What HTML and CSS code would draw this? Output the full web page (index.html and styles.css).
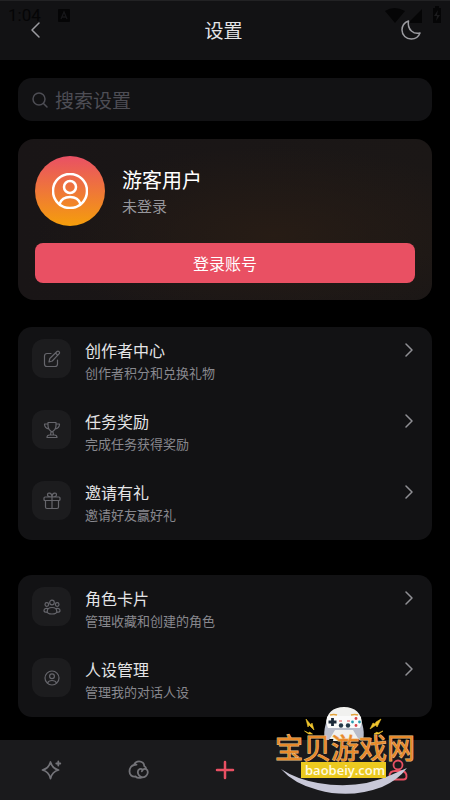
FILE: index.html
```html
<!DOCTYPE html>
<html lang="zh-CN">
<head>
<meta charset="utf-8">
<meta name="viewport" content="width=device-width, initial-scale=1">
<title>设置</title>
<link rel="stylesheet" href="styles.css">
</head>
<body>
<div class="app">
  <div class="status">
    <span class="status-time">1:04</span>
    <svg class="status-app" width="12" height="13" viewBox="0 0 12 13"><rect width="12" height="13" rx="1" fill="#050506"/><path d="M3 10 6 3l3 7M4.200 8h3.600" fill="none" stroke="#17171a" stroke-width="1.300"/></svg>
    <svg class="status-signal" width="58" height="18" viewBox="0 0 58 18" fill="#050506"><path d="M1 5Q10-1 21 5L11 17ZM38 3v14H24ZM49 2h2V0h4v2h2v15h-8Z"/><path d="m54 4-4 6h3l-1 5 4-6h-3Z" fill="#1b1b1d"/></svg>
  </div>
  <header class="topbar">
    <button class="icon-button" aria-label="返回"><svg width="24" height="24" viewBox="0 0 24 24"><path d="m15 5-7 7 7 7"/></svg></button>
    <h1>设置</h1>
    <button class="icon-button" aria-label="深色模式"><svg width="24" height="24" viewBox="0 0 24 24"><path d="M9.500 3C5.500 4.500 3 7.800 3 12c0 5.200 4.200 9 9.300 9 3.900 0 7.200-2.100 8.700-6-6 1.600-13-3-11.500-12Z"/></svg></button>
  </header>
  <main>
    <label class="search">
      <svg width="16" height="16" viewBox="0 0 16 16"><circle cx="7" cy="7" r="6"/><path d="m11.500 11.500 3.500 3.500"/></svg>
      <input type="search" placeholder="搜索设置" aria-label="搜索设置">
    </label>
    <section class="profile">
      <div class="profile-user">
        <div class="avatar"><svg width="36" height="36" viewBox="0 0 36 36"><circle cx="18" cy="18" r="17"/><circle cx="18" cy="14" r="6"/><path d="M7.500 31c1.500-4.500 5.500-7 10.500-7s9 2.500 10.500 7"/></svg></div>
        <div class="profile-text"><h2>游客用户</h2><p>未登录</p></div>
      </div>
      <button class="login">登录账号</button>
    </section>
    <nav class="group" aria-label="创作与奖励">
      <a class="row" href="#creator">
        <span class="tile"><svg width="18" height="18" viewBox="0 0 18 18"><path d="M8 3.500H4A2.500 2.500 0 0 0 1.500 6v8A2.500 2.500 0 0 0 4 16.500h8a2.500 2.500 0 0 0 2.500-2.500v-4M6 12l.8-3.500L14 1.500q1-.8 2 .2t.2 2L9.300 11ZM12.500 3l2.300 2.300"/></svg></span>
        <span class="text"><strong>创作者中心</strong><small>创作者积分和兑换礼物</small></span>
        <svg class="chevron" width="10" height="14" viewBox="0 0 10 14"><path d="m2 1 6 6-6 6"/></svg>
      </a>
      <a class="row" href="#tasks">
        <span class="tile"><svg width="18" height="18" viewBox="0 0 18 18"><path d="M5 1.500h8v3c0 3-1.500 5-4 6.500-2.500-1.500-4-3.500-4-6.500ZM5 3H1.500c0 3 1.500 4.500 4.500 5M13 3h3.500c0 3-1.500 4.500-4.500 5M8 11l-.5 3h3L10 11M4 16.500c0-1.700.8-2.500 2.500-2.500h5c1.700 0 2.500.8 2.500 2.500Z"/></svg></span>
        <span class="text"><strong>任务奖励</strong><small>完成任务获得奖励</small></span>
        <svg class="chevron" width="10" height="14" viewBox="0 0 10 14"><path d="m2 1 6 6-6 6"/></svg>
      </a>
      <a class="row" href="#invite">
        <span class="tile"><svg width="18" height="18" viewBox="0 0 18 18"><path d="M2 5h14q1 0 1 1v1.500q0 1-1 1H2q-1 0-1-1V6q0-1 1-1ZM2.500 8.500V15q0 1.500 1.500 1.500h10q1.500 0 1.500-1.500V8.500M9 5v11.500M9 5C5.500 5 4.500 4 4.500 2.800 4.500 0 9 .5 9 5c0-4.500 4.500-5 4.500-2.200C13.500 4 12.500 5 9 5"/></svg></span>
        <span class="text"><strong>邀请有礼</strong><small>邀请好友赢好礼</small></span>
        <svg class="chevron" width="10" height="14" viewBox="0 0 10 14"><path d="m2 1 6 6-6 6"/></svg>
      </a>
    </nav>
    <nav class="group" aria-label="角色管理">
      <a class="row" href="#cards">
        <span class="tile"><svg width="18" height="18" viewBox="0 0 18 18"><circle cx="9" cy="4.500" r="2.300"/><circle cx="3.800" cy="6.500" r="1.800"/><circle cx="14.200" cy="6.500" r="1.800"/><path d="M9 9.500c3 0 4.800 1.700 4.800 4 0 1.500-2 2.500-4.800 2.500s-4.800-1-4.800-2.500c0-2.300 1.800-4 4.800-4ZM4.800 10.500C2.500 10 1 11 1 12.800c0 1 1.400 1.600 3.400 1.600M13.200 10.500c2.300-.5 3.800.5 3.800 2.300 0 1-1.400 1.600-3.400 1.600"/></svg></span>
        <span class="text"><strong>角色卡片</strong><small>管理收藏和创建的角色</small></span>
        <svg class="chevron" width="10" height="14" viewBox="0 0 10 14"><path d="m2 1 6 6-6 6"/></svg>
      </a>
      <a class="row" href="#personas">
        <span class="tile"><svg width="18" height="18" viewBox="0 0 18 18"><circle cx="9" cy="9" r="7"/><circle cx="9" cy="7.300" r="2.400"/><path d="M4.500 14c.8-1.800 2.500-2.500 4.500-2.500s3.700.7 4.500 2.500"/></svg></span>
        <span class="text"><strong>人设管理</strong><small>管理我的对话人设</small></span>
        <svg class="chevron" width="10" height="14" viewBox="0 0 10 14"><path d="m2 1 6 6-6 6"/></svg>
      </a>
    </nav>
  </main>
  <footer class="tabs">
    <a href="#explore" aria-label="发现"><svg width="22" height="22" viewBox="0 0 22 22"><path d="M9.500 3c1.200 4.500 3.500 6.800 8 8-4.500 1.200-6.800 3.500-8 8.500-1.200-5-3.500-7.300-8-8.500 4.500-1.200 6.800-3.500 8-8ZM17.300 2.500v4M15.300 4.500h4"/></svg></a>
    <a href="#chat" aria-label="聊天"><svg width="22" height="22" viewBox="0 0 22 22"><path d="M14 18.300c-2.500 1-5 .7-6.500-.8-3.500.5-6-1.500-6-5S3.700 6.500 6 6c1-3 3-3.700 5-3.700 3 0 5.300 2 5.200 4.700 1.500.8 2 2 2 3.200M6 6l2.500-.3M14.800 10.800c-2-1.800-5-.6-5 2.200 0 2.800 2.200 5.300 5 5.300s5-2.500 5-5.300c0-2.800-3-4-5-2.200ZM14.800 10.800l-1 1.500"/></svg></a>
    <a class="accent" href="#create" aria-label="创建"><svg width="22" height="22" viewBox="0 0 22 22"><path d="M11 3v16M3 11h16" stroke-width="2.500"/></svg></a>
    <a href="#messages" aria-label="消息"></a>
    <a class="accent" href="#me" aria-label="我的"><svg width="22" height="22" viewBox="0 0 22 22"><circle cx="11" cy="6" r="4.500"/><path d="M8 12h6c3.500 0 5.500 2 5.500 5.500 0 2-1 3-3 3h-11c-2 0-3-1-3-3C2.500 14 4.500 12 8 12Z"/></svg></a>
  </footer>
  <div class="stamp">
    <svg width="150" height="100" viewBox="270 700 150 100">
      <path d="M281 769Q296 779 318 783Q358 790 391 775Q400 771 407 768Q398 780 382 787Q350 799 318 790Q294 784 281 769Z" fill="#c8c8d8"/>
      <path d="M326 725c0-12 7-18 18-18s18 6 18 18l1 14h-38Z" fill="#f1f1ef"/>
      <path d="M326 723q-3 10-1 17h4l6-10h18l6 10h4q2-7-1-17l-5 5h-26Z" fill="#b9bdcb"/>
      <path d="M327 717q2-3 8-2l3 1h12l3-1q6-1 8 2 1 7-1 11H328q-2-4-1-11Z" fill="#fafafa"/>
      <path d="M330 715q4-1 7 0M351 715q4-1 7 0" stroke="#e3a33b" stroke-width="1.600" fill="none"/>
      <path d="M332.500 718v8M328.500 722h8" stroke="#1b2838" stroke-width="2.800"/>
      <circle cx="341" cy="725.500" r="2.200" fill="#243849"/><circle cx="348" cy="725.500" r="2.200" fill="#243849"/>
      <g fill="#d94349"><circle cx="356" cy="718.500" r="1.400"/><circle cx="356" cy="725.500" r="1.400"/></g><g fill="#279aae"><circle cx="352.500" cy="722" r="1.400"/><circle cx="359.500" cy="722" r="1.400"/></g><path d="M339 721h3M347 721h3" stroke="#e04b50"/>
      <path d="M333 741q1-10 11-10t11 10Z" fill="#f1f1ef"/>
      <path d="m306 719 5 6 1-2 2 7-5-5-1 2ZM381 719l-5 3-1 2-2-1-3 6 6-4 1 2ZM304.500 731l4 2 1-1 3 2-4 0-1-1ZM383 731l-5 2-1-1-3 2 5 0 1-1Z" fill="#f1c62e" stroke="#f1c62e" stroke-width=".6"/>
      <rect x="301" y="762" width="85" height="16" fill="#ebc91f"/>
      <text class="stamp-title" x="275" y="759">宝贝游戏网</text>
      <text class="stamp-url" x="305" y="775">baobeiy.com</text>
    </svg>
  </div>
</div>
</body>
</html>
```

FILE: styles.css
```css
* { box-sizing: border-box; }

body {
  margin: 0;
  background: #000;
  color: #e4e4e6;
  font-family: "Noto Sans CJK SC", sans-serif;
}

h1, h2, p { margin: 0; font-weight: 400; }
a { color: inherit; text-decoration: none; }
button, input { font: inherit; color: inherit; border: 0; padding: 0; background: none; }
svg { display: block; flex: none; }

.app {
  position: relative;
  display: flex;
  flex-direction: column;
  min-height: 100vh;
}

.status {
  position: absolute;
  inset: 7px 8px auto;
  display: flex;
  align-items: center;
  height: 16px;
  color: #050506;
  font: 17px/16px Roboto, sans-serif;
}
.status-app { margin-left: 17px; }
.status-signal { margin-left: auto; }

.topbar {
  display: flex;
  align-items: center;
  justify-content: space-between;
  height: 60px;
  padding: 0 27px 0 24px;
  background: #121214;
  box-shadow: inset 0 1px #222224;
}
.topbar h1 { font-size: 19px; line-height: 28px; }
.icon-button { position: relative; color: #9b9ba0; }
.icon-button svg, .search svg, .avatar svg, .tile svg, .chevron, .tabs svg {
  fill: none;
  stroke: currentColor;
  stroke-width: 1.5px;
  stroke-linecap: round;
  stroke-linejoin: round;
}

main { flex: 1; padding: 18px 18px 23px; }

.search {
  display: flex;
  align-items: center;
  gap: 7px;
  height: 43px;
  padding: 0 14px;
  border-radius: 14px;
  background: #121214;
  color: #4d4d54;
}
.search input { flex: 1; min-width: 0; font-size: 19px; line-height: 28px; outline: 0; appearance: none; }
.search input::placeholder { color: #4d4d54; opacity: 1; }

.profile {
  margin: 18px 0 27px;
  padding: 17px;
  border-radius: 16px;
  background:
    radial-gradient(ellipse at 62% 60%, #271c15 0%, rgba(39, 28, 21, 0) 65%),
    linear-gradient(90deg, #191516, #1b1716);
}
.profile-user { display: flex; align-items: center; gap: 17px; }
.profile-text { padding-top: 2px; }
.avatar {
  display: grid;
  place-items: center;
  width: 70px;
  height: 70px;
  border-radius: 50%;
  background: linear-gradient(#e95065, #f59e0b);
  color: #fff;
}
.avatar svg { stroke-width: 2.5px; }
.profile h2 { color: #fff; font-size: 20px; line-height: 28px; }
.profile p { color: #96969b; font-size: 15px; line-height: 24px; }
.login {
  display: block;
  width: 100%;
  height: 40px;
  margin-top: 17px;
  border-radius: 8px;
  background: #e95063;
  color: #fff;
  font-size: 16px;
}

.group { border-radius: 14px; background: #121214; }
.group + .group { margin-top: 35px; }
.row {
  display: flex;
  align-items: flex-start;
  height: 71px;
  padding: 12px 18px 0 14px;
}
.tile {
  display: grid;
  place-items: center;
  width: 39px;
  height: 39px;
  margin-right: 14px;
  border-radius: 12px;
  background: #1c1c1e;
  color: #66666c;
}
.tile svg { stroke-width: 1.2px; }
.text { display: flex; flex: 1; flex-direction: column; }
.text strong { font-size: 16px; font-weight: 400; line-height: 22px; }
.text small { color: #88888e; font-size: 13px; line-height: 24px; }
.chevron { margin-top: 4px; color: #8f8f94; }

.tabs {
  display: grid;
  grid-template-columns: repeat(5, 1fr);
  place-items: center;
  height: 60px;
  padding: 0 9px;
  background: #1a1a1c;
  color: #737378;
}
.tabs .accent { color: #e95063; }
.tabs svg { stroke-width: 1.8px; }

.stamp { position: absolute; right: 30px; bottom: 0; pointer-events: none; }
.stamp-title {
  fill: #e88a2b;
  stroke: #efc084;
  stroke-width: 1px;
  paint-order: stroke;
  font-size: 28px;
  font-weight: 400;
}
.stamp-url { fill: #fffbe0; font: 600 13px "Open Sans", sans-serif; }
```
